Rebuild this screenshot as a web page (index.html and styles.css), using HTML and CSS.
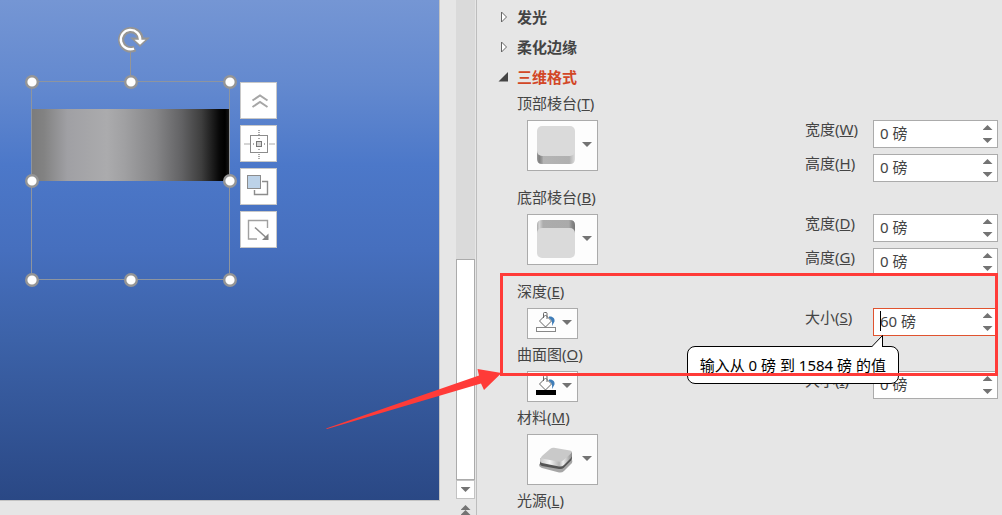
FILE: index.html
```html
<!DOCTYPE html>
<html lang="zh-CN">
<head>
    <meta charset="UTF-8">
    <meta name="viewport" content="width=device-width, initial-scale=1.0">
    <title>三维格式</title>
    <link rel="stylesheet" href="styles.css">
</head>
<body>
    <main class="workspace">
        <div class="slide">
            <div class="shape-fill"></div>
            <svg class="selection" width="212" height="264" viewBox="0 0 212 264">
                <rect x="6.500" y="56.500" width="198" height="198" fill="none" stroke="#8e959f"/>
                <path d="M105.500 26v30" stroke="#959595"/>
                <!-- Rotate handle -->
                <path d="M110 23.500a9.700 9.700 0 1 1 5.500-8" fill="none" stroke="#959595" stroke-width="6.200"/>
                <path d="M105 12.500h20l-10 9.500z" fill="#959595"/>
                <path d="M109 23.600a9.700 9.700 0 1 1 6.200-8.600" fill="none" stroke="#fff" stroke-width="2.400"/>
                <path d="M109.500 14.800h11l-5.500 5z" fill="#fff"/>
                <g fill="#fff" stroke="#959595" stroke-width="2.400">
                    <circle cx="7" cy="57" r="5.800"/>
                    <circle cx="106" cy="57" r="5.800"/>
                    <circle cx="205" cy="57" r="5.800"/>
                    <circle cx="7" cy="156" r="5.800"/>
                    <circle cx="205" cy="156" r="5.800"/>
                    <circle cx="7" cy="255" r="5.800"/>
                    <circle cx="106" cy="255" r="5.800"/>
                    <circle cx="205" cy="255" r="5.800"/>
                </g>
            </svg>
            <div class="float-tools">
                <button class="tool" aria-label="收起">
                    <svg width="35" height="35" viewBox="0 0 35 35" fill="none" stroke="#a6a6a6" stroke-width="2">
                        <path d="M11.500 17.500l7.500-5 7.500 5M11.500 24l7.500-5 7.500 5"/>
                    </svg>
                </button>
                <button class="tool" aria-label="对齐">
                    <svg width="35" height="35" viewBox="0 0 35 35" fill="none" stroke="#8c8c8c">
                        <rect x="9.500" y="9.500" width="17" height="17"/>
                        <path d="M18 4v5M18 12v2M18 23v2M18 28v5M3.500 18h5M12 18h2M23 18h2M28.500 18h5" stroke="#aaa" stroke-width="2" stroke-dasharray="1 1"/>
                        <rect x="15.500" y="15.500" width="5" height="5" fill="#d4d4d4" stroke="#777"/>
                    </svg>
                </button>
                <button class="tool" aria-label="叠放次序">
                    <svg width="35" height="35" viewBox="0 0 35 35" fill="none" stroke="#8c8c8c">
                        <path d="M21 12.500h5.500v13h-13V21" stroke-width="1.400"/>
                        <rect x="6.500" y="6.500" width="13" height="13" fill="#bcd2e8"/>
                    </svg>
                </button>
                <button class="tool" aria-label="大小">
                    <svg width="35" height="35" viewBox="0 0 35 35" fill="none" stroke="#a0a0a0">
                        <path d="M26.500 16V8.500h-19v18.500H16" stroke-width="1.400"/>
                        <path d="M14 15.500L24.500 25" stroke="#8c8c8c" stroke-width="1.600"/>
                        <path d="M27.500 21.500V28H21z" fill="#858585" stroke="none"/>
                    </svg>
                </button>
            </div>
        </div>
        <div class="scrollbar">
            <div class="track"><div class="thumb"></div></div>
            <button class="scroll-down" aria-label="向下滚动"><span class="arrow down"></span></button>
            <button class="prev-slide" aria-label="上一张幻灯片">
                <span class="arrow up"></span>
                <span class="arrow up"></span>
            </button>
        </div>
    </main>

    <aside class="pane">
        <button class="section" aria-expanded="false">
            <svg width="16" height="14" viewBox="0 0 16 14"><path d="M.5 2v10l5-5z" fill="#fff" stroke="#666"/></svg>
            发光
        </button>
        <button class="section" aria-expanded="false">
            <svg width="16" height="14" viewBox="0 0 16 14"><path d="M.5 2v10l5-5z" fill="#fff" stroke="#666"/></svg>
            柔化边缘
        </button>
        <button class="section open" aria-expanded="true">
            <svg width="16" height="14" viewBox="0 0 16 14"><path d="M7 2v9.500H-2.500z" fill="#444"/></svg>
            三维格式
        </button>

        <div class="group">
            <label for="top-bevel">顶部棱台(<u>T</u>)</label>
            <div class="controls">
                <button class="picker" id="top-bevel">
                    <svg width="38" height="38" viewBox="0 0 38 38">
                        <defs>
                            <linearGradient id="side" x2="1">
                                <stop offset="0" stop-color="#999"/>
                                <stop offset=".06" stop-color="#808080"/>
                                <stop offset=".14" stop-color="#a0a0a0"/>
                                <stop offset=".16" stop-color="#b4b4b4"/>
                                <stop offset=".85" stop-color="#b0b0b0"/>
                                <stop offset="1" stop-color="#ddd"/>
                            </linearGradient>
                        </defs>
                        <path d="M0 25v8q0 5 5 5h28q5 0 5-5v-8z" fill="url(#side)"/>
                        <rect width="38" height="30" rx="5" fill="#dadada"/>
                    </svg>
                    <span class="arrow down"></span>
                </button>
                <div class="fields">
                    <div class="field">
                        <label for="top-width">宽度(<u>W</u>)</label>
                        <div class="spin">
                            <input type="text" id="top-width" value="0 磅">
                            <div class="steps">
                                <button aria-label="增加"><span class="arrow up"></span></button>
                                <button aria-label="减少"><span class="arrow down"></span></button>
                            </div>
                        </div>
                    </div>
                    <div class="field">
                        <label for="top-height">高度(<u>H</u>)</label>
                        <div class="spin">
                            <input type="text" id="top-height" value="0 磅">
                            <div class="steps">
                                <button aria-label="增加"><span class="arrow up"></span></button>
                                <button aria-label="减少"><span class="arrow down"></span></button>
                            </div>
                        </div>
                    </div>
                </div>
            </div>
        </div>

        <div class="group">
            <label for="bottom-bevel">底部棱台(<u>B</u>)</label>
            <div class="controls">
                <button class="picker" id="bottom-bevel">
                    <svg width="38" height="38" viewBox="0 0 38 38">
                        <defs>
                            <linearGradient id="side-back" x2="1">
                                <stop offset="0" stop-color="#aaa"/>
                                <stop offset=".06" stop-color="#d4d4d4"/>
                                <stop offset=".16" stop-color="#acacac"/>
                                <stop offset=".84" stop-color="#aaa"/>
                                <stop offset=".92" stop-color="#888"/>
                                <stop offset="1" stop-color="#777"/>
                            </linearGradient>
                        </defs>
                        <path d="M0 13V5q0-5 5-5h28q5 0 5 5v8z" fill="url(#side-back)"/>
                        <rect y="8" width="38" height="30" rx="5" fill="#dadada"/>
                    </svg>
                    <span class="arrow down"></span>
                </button>
                <div class="fields">
                    <div class="field">
                        <label for="bottom-width">宽度(<u>D</u>)</label>
                        <div class="spin">
                            <input type="text" id="bottom-width" value="0 磅">
                            <div class="steps">
                                <button aria-label="增加"><span class="arrow up"></span></button>
                                <button aria-label="减少"><span class="arrow down"></span></button>
                            </div>
                        </div>
                    </div>
                    <div class="field">
                        <label for="bottom-height">高度(<u>G</u>)</label>
                        <div class="spin">
                            <input type="text" id="bottom-height" value="0 磅">
                            <div class="steps">
                                <button aria-label="增加"><span class="arrow up"></span></button>
                                <button aria-label="减少"><span class="arrow down"></span></button>
                            </div>
                        </div>
                    </div>
                </div>
            </div>
        </div>

        <div class="group">
            <label for="depth-color">深度(<u>E</u>)</label>
            <div class="controls">
                <button class="picker small" id="depth-color">
                    <svg width="20" height="21" viewBox="0 0 20 21">
                        <path d="M9.500 3L3.500 9l6 6 6-6z" fill="#fff" stroke="#666"/>
                        <path d="M7.500 6V1.500q0-1 1-1H10q1 0 1 1V7" fill="none" stroke="#666"/>
                        <path d="M13 4.500c4-.500 6 2 5.500 5L16 14c.500-4 0-6-3-8z" fill="#3f7db8"/>
                        <rect x=".5" y="15.500" width="19" height="4" fill="#fff" stroke="#888"/>
                    </svg>
                    <span class="arrow down"></span>
                </button>
                <div class="fields">
                    <div class="field">
                        <label for="depth-size">大小(<u>S</u>)</label>
                        <div class="spin active">
                            <input type="text" id="depth-size" value="60 磅" aria-describedby="depth-tip">
                            <span class="caret"></span>
                            <div class="steps">
                                <button aria-label="增加"><span class="arrow up"></span></button>
                                <button aria-label="减少"><span class="arrow down"></span></button>
                            </div>
                            <div class="tip" id="depth-tip" role="tooltip">
                                输入从 0 磅 到 1584 磅 的值
                                <svg class="tip-tail" width="13" height="13" viewBox="0 0 13 13"><path d="M.5 12L11.500 .5V12" fill="#fff" stroke="#000"/></svg>
                            </div>
                        </div>
                    </div>
                </div>
            </div>
        </div>

        <div class="group">
            <label for="contour-color">曲面图(<u>O</u>)</label>
            <div class="controls">
                <button class="picker small" id="contour-color">
                    <svg width="20" height="21" viewBox="0 0 20 21">
                        <path d="M9.500 3L3.500 9l6 6 6-6z" fill="#fff" stroke="#666"/>
                        <path d="M7.500 6V1.500q0-1 1-1H10q1 0 1 1V7" fill="none" stroke="#666"/>
                        <path d="M13 4.500c4-.500 6 2 5.500 5L16 14c.500-4 0-6-3-8z" fill="#3f7db8"/>
                        <rect y="15" width="20" height="5" fill="#000"/>
                    </svg>
                    <span class="arrow down"></span>
                </button>
                <div class="fields">
                    <div class="field">
                        <label for="contour-size">大小(<u>I</u>)</label>
                        <div class="spin">
                            <input type="text" id="contour-size" value="0 磅">
                            <div class="steps">
                                <button aria-label="增加"><span class="arrow up"></span></button>
                                <button aria-label="减少"><span class="arrow down"></span></button>
                            </div>
                        </div>
                    </div>
                </div>
            </div>
        </div>

        <div class="group">
            <label for="material">材料(<u>M</u>)</label>
            <div class="controls">
                <button class="picker" id="material">
                    <svg width="38" height="38" viewBox="0 0 38 38">
                        <defs>
                            <linearGradient id="edge" x2="1">
                                <stop offset="0" stop-color="#c8c8c8"/>
                                <stop offset=".3" stop-color="#f6f6f6"/>
                                <stop offset=".6" stop-color="#b4b4b4"/>
                                <stop offset=".72" stop-color="#f0f0f0"/>
                                <stop offset="1" stop-color="#8c8c8c"/>
                            </linearGradient>
                        </defs>
                        <path d="M2 25q0-2 4-2l28-5q2 3 1 5l-8 8q-2 2-5 1.500L5 28q-3-1-3-3z" fill="#a6a6a6"/>
                        <path d="M3 20v4q0 1.500 2 2l17 3q3 .500 5-1.500l7-7q1-1 1-3v-3z" fill="#555"/>
                        <path d="M3 18v3q0 1.500 2 2l17 3.500q3 .500 5-1.500l7-7q1-1 1-3v-3z" fill="url(#edge)"/>
                        <path d="M5 16l8-7q2-1.500 4-1.200L33 10.500q3 .500 1 3l-8 7q-2 1.500-5 1L5 18.500q-2-.500 0-2.500z" fill="#c9c9c9"/>
                    </svg>
                    <span class="arrow down"></span>
                </button>
            </div>
        </div>

        <div class="group">
            <label>光源(<u>L</u>)</label>
        </div>

        <div class="highlight">
            <svg class="pointer" width="176" height="62" viewBox="0 0 176 62">
                <path d="M0 60.500L153 7.500 151.500 1l24 4-17.500 17-3-6.500L1 61z" fill="#ff3b38"/>
            </svg>
        </div>
    </aside>
</body>
</html>
```
FILE: styles.css
```css
:root {
    --surface: #e6e6e6;
    --text: #444444;
    --accent: #d24726;
    --border: #ababab;
    --mark: #ff3b38;
}

* {
    margin: 0;
    padding: 0;
    box-sizing: border-box;
}

body {
    display: grid;
    grid-template-columns: 476fr 526fr;
    height: 100vh;
    overflow: hidden;
    background: var(--surface);
    color: var(--text);
    font-family: "Noto Sans", "Noto Sans CJK SC", sans-serif;
    font-size: 15px;
    line-height: 22px;
}

button,
input {
    font: inherit;
    color: inherit;
    border: none;
    background: none;
}

/* Slide area */
.workspace {
    display: flex;
    gap: 16px;
    padding-right: 1px;
    min-width: 0;
}

.slide {
    position: relative;
    flex: 1;
    margin-bottom: 14px;
    border-right: 1px solid #c3c3c3;
    border-bottom: 1px solid #c3c3c3;
    background: linear-gradient(#7596d4 0%, #6389cf 17%, #4c78c9 33%, #466fbe 50%, #3c62a8 68%, #2a4885 100%);
}

.shape-fill {
    position: absolute;
    left: 32px;
    top: 109px;
    width: 197px;
    height: 72px;
    background: linear-gradient(90deg, #7c7c7c 0%, #828282 6%, #a0a0a4 18%, #ababad 38%, #a0a0a2 47%, #858587 63%, #626264 76%, #3e3e3e 86%, #080808 95%, #000 98%, #161616 100%);
}

.selection {
    position: absolute;
    left: 25px;
    top: 25px;
}

.float-tools {
    position: absolute;
    left: 240px;
    top: 82px;
    display: grid;
    gap: 6px;
}

.tool {
    display: grid;
    width: 37px;
    height: 37px;
    border: 1px solid #c8c8c8;
    background: #fff;
}

/* Scrollbar */
.scrollbar {
    display: flex;
    flex-direction: column;
    width: 19px;
}

.track {
    display: flex;
    flex: 1;
    align-items: flex-end;
    background: #dadada;
}

.thumb {
    width: 100%;
    height: 46%;
    border: 1px solid var(--border);
    background: #fff;
}

.scroll-down {
    display: grid;
    place-items: center;
    height: 19px;
    border: 1px solid #c3c3c3;
    background: #fff;
}

.prev-slide {
    display: grid;
    justify-items: center;
    height: 16px;
    padding-top: 6px;
}

.arrow {
    display: block;
    width: 10px;
    height: 5px;
    background: #737373;
}

.arrow.up {
    clip-path: polygon(50% 0, 100% 100%, 0 100%);
}

.arrow.down {
    clip-path: polygon(0 0, 100% 0, 50% 100%);
}

/* Format pane */
.pane {
    position: relative;
    min-width: 0;
    padding: 2px 4px 0 24px;
    border-left: 1px solid #bdbdbd;
}

.section {
    display: flex;
    align-items: center;
    width: 100%;
    height: 30px;
    font-weight: 700;
}

.section.open {
    color: var(--accent);
}

.section svg {
    overflow: visible;
}

.group {
    padding: 0 0 4px 16px;
}

.group label {
    display: block;
}

.controls {
    display: flex;
    align-items: flex-start;
    justify-content: space-between;
    padding: 6px 0 0 10px;
}

.picker {
    display: flex;
    align-items: center;
    justify-content: space-between;
    width: 71px;
    height: 51px;
    padding: 0 5px 2px 9px;
    border: 1px solid var(--border);
    background: #fdfdfd;
}

.picker.small {
    width: 51px;
    height: 31px;
    padding-left: 8px;
}

.fields {
    display: grid;
    gap: 6px;
}

.field {
    display: grid;
    grid-template-columns: 68px 125px;
    line-height: 18px;
}

.spin {
    position: relative;
    display: flex;
    height: 28px;
    border: 1px solid var(--border);
    background: #fff;
}

.spin.active {
    border-color: #e0532f;
}

.spin input {
    flex: 1;
    min-width: 0;
    padding: 0 0 2px 6px;
    outline: none;
}

.caret {
    position: absolute;
    left: 6px;
    top: 2px;
    width: 1px;
    height: 20px;
    background: #000;
}

.steps {
    display: grid;
    width: 19px;
}

.steps button {
    display: grid;
    place-items: center;
}

.tip {
    position: absolute;
    z-index: 1;
    top: 37px;
    right: 98px;
    padding: 9px 12px;
    border: 1px solid #000;
    border-radius: 8px;
    background: #fff;
    color: #000;
    white-space: nowrap;
}

.tip-tail {
    position: absolute;
    right: 14px;
    bottom: 100%;
    margin-bottom: -1px;
}

/* Red marks over the pane */
.highlight {
    position: absolute;
    z-index: 2;
    top: 273px;
    left: 23px;
    right: 4px;
    height: 103px;
    border: 3px solid var(--mark);
    pointer-events: none;
}

.pointer {
    position: absolute;
    left: -177px;
    bottom: -57px;
}
```
